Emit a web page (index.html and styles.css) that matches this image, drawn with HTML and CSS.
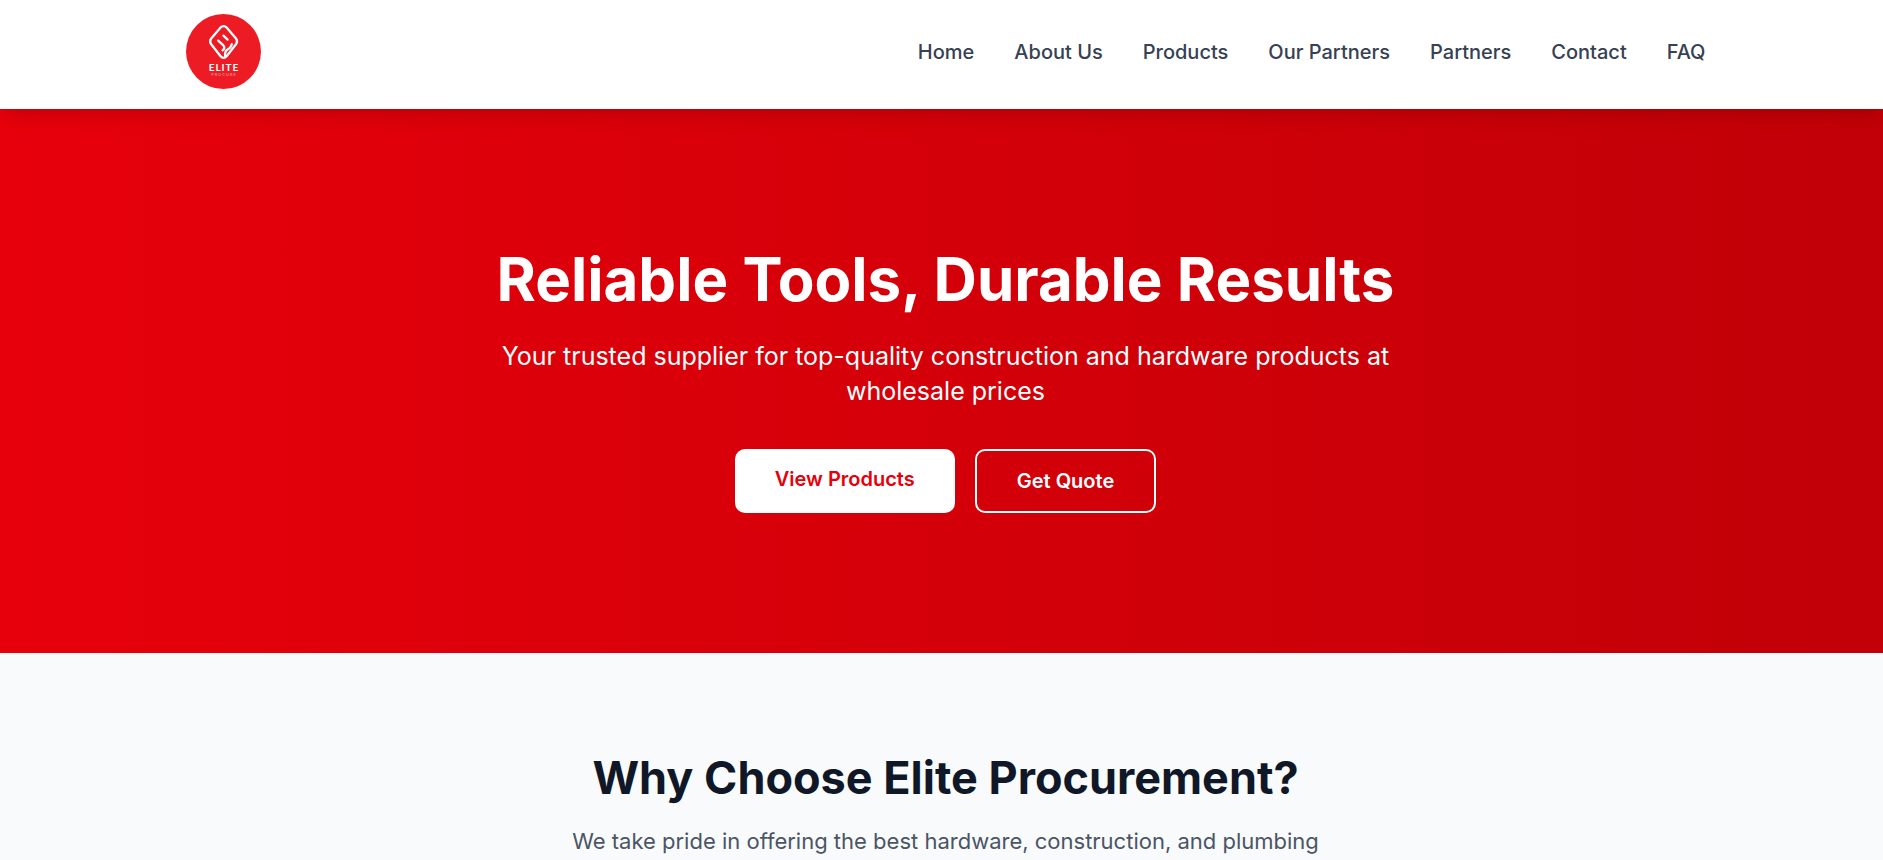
FILE: index.html
```html
<!DOCTYPE html>
<html lang="en">
<head>
<meta charset="utf-8">
<meta name="viewport" content="width=device-width, initial-scale=1">
<title>Elite Procurement</title>
<link rel="stylesheet" href="styles.css">
</head>
<body>
<header class="header">
  <div class="header-inner">
    <a class="logo" href="#" aria-label="Elite Procurement home">
      <svg viewBox="0 0 75 75" width="75" height="75">
        <circle cx="37.500" cy="37.500" r="37.500" fill="#ed1c24"/>
        <g fill="none" stroke="#fff" stroke-linecap="round" stroke-linejoin="round">
          <path stroke-width="2.300" d="M34.600 13.400Q37.600 10.900 40.600 13.400L50 24.400Q52 27.200 50.200 30L40.800 42Q37.600 45.800 34.400 42L25 30Q23.200 27.200 25.200 24.400Z"/>
          <path stroke-width="2.300" d="M37.400 21.600L41.600 25.600M32.200 26.600L37.400 31.400Q39.600 34 36.600 36.400M45.800 30.200Q45 33.600 41.600 35.400Q38.400 37.200 39.200 42.400"/>
        </g>
        <text class="logo-name" x="38" y="57" text-anchor="middle">ELITE</text>
        <text class="logo-sub" x="38" y="62" text-anchor="middle">PROCURE</text>
      </svg>
    </a>
    <nav class="nav">
      <a href="#">Home</a>
      <a href="#">About Us</a>
      <a href="#">Products</a>
      <a href="#">Our Partners</a>
      <a href="#">Partners</a>
      <a href="#">Contact</a>
      <a href="#">FAQ</a>
    </nav>
  </div>
</header>
<main>
  <section class="hero">
    <h1>Reliable Tools, Durable Results</h1>
    <p>Your trusted supplier for top-quality construction and hardware products at wholesale prices</p>
    <div class="actions">
      <a class="btn btn-solid" href="#">View Products</a>
      <a class="btn btn-outline" href="#">Get Quote</a>
    </div>
  </section>
  <section class="why">
    <h2>Why Choose Elite Procurement?</h2>
    <p>We take pride in offering the best hardware, construction, and plumbing</p>
  </section>
</main>
</body>
</html>
```
FILE: styles.css
```css
* { box-sizing: border-box; }
body {
  margin: 0;
  background: #f9fafb;
  font-family: Inter, "Liberation Sans", sans-serif;
  font-size: 20px;
  line-height: 30px;
  color: #101828;
}
h1, h2, p { margin: 0; }
a { text-decoration: none; }
.header, .hero, .why { padding-left: 8px; }
.header {
  position: relative;
  z-index: 1;
  background: #fff;
  box-shadow: 0 12px 18px -4px rgba(0, 0, 0, .1), 0 5px 8px -5px rgba(0, 0, 0, .1);
}
.header-inner {
  max-width: 1600px;
  margin: 0 auto;
  padding: 14px 40px 20px;
  display: flex;
  align-items: center;
  justify-content: space-between;
}
.logo, .logo svg { display: block; }
.logo-name { fill: #fff; font: 700 10px Lato, sans-serif; letter-spacing: 1px; }
.logo-sub { fill: #f9a3a6; font: 400 4px Lato, sans-serif; letter-spacing: 1px; }
.nav { display: flex; gap: 40px; }
.nav a { color: #364153; font-weight: 500; }
.hero {
  padding-top: 140px;
  padding-bottom: 140px;
  background: linear-gradient(90deg, #e7000b, #c10007);
  color: #fff;
  text-align: center;
}
.hero h1 { font-size: 60px; line-height: 60px; font-weight: 700; }
.hero p { max-width: 960px; margin: 30px auto 40px; font-size: 25px; line-height: 35px; }
.actions { display: flex; justify-content: center; gap: 20px; }
.btn { padding: 15px 40px; border-radius: 10px; font-weight: 600; }
.btn-solid { background: #fff; color: #e7000b; }
.btn-outline { border: 2px solid #fff; color: #fff; }
.why { padding-top: 100px; text-align: center; }
.why h2 { font-size: 45px; line-height: 50px; font-weight: 700; }
.why p { margin-top: 20px; font-size: 22px; line-height: 36px; color: #4a5565; }
```
